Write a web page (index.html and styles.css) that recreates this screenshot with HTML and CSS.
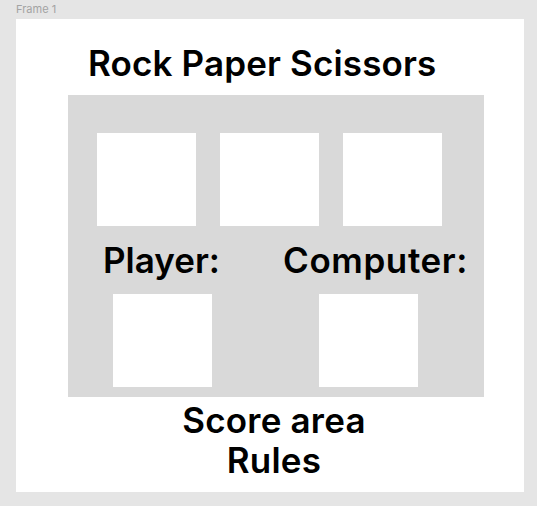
FILE: index.html
```html
<!DOCTYPE html>
<html>
<head>
<meta charset="utf-8">
<link rel="stylesheet" href="styles.css">
</head>
<body>
<div class="label">Frame 1</div>
<div class="frame">
  <h1 class="title">Rock Paper Scissors</h1>
  <div class="panel">
    <div class="choices">
      <div class="box"></div>
      <div class="box"></div>
      <div class="box"></div>
    </div>
    <div class="players">
      <div class="player p1">
        <div class="name">Player:</div>
        <div class="box"></div>
      </div>
      <div class="player p2">
        <div class="name">Computer:</div>
        <div class="box"></div>
      </div>
    </div>
  </div>
  <div class="footer">
    <div class="line">Score area</div>
    <div class="line">Rules</div>
  </div>
</div>
</body>
</html>
```
FILE: styles.css
```css
* { box-sizing: border-box; }
html, body { margin: 0; padding: 0; }
body {
  background: #e5e5e5;
  font-family: Inter, "Noto Sans", sans-serif;
  width: 537px;
  height: 506px;
  overflow: hidden;
}
.label {
  font-size: 11px;
  color: #a3a3a3;
  padding: 2px 0 0 16px;
  height: 19px;
  line-height: 14px;
}
.frame {
  margin-left: 16px;
  width: 508px;
  height: 473px;
  background: #ffffff;
  display: flex;
  flex-direction: column;
}
.title {
  margin: 0;
  padding: 24px 0 0 72px;
  font-size: 35px;
  font-weight: 600;
  line-height: 40px;
  height: 76px;
  color: #000;
  letter-spacing: 0.15px;
}
.panel {
  margin-left: 52px;
  width: 416px;
  height: 302px;
  background: #d9d9d9;
  padding: 38px 0 0 29px;
}
.choices {
  display: flex;
  gap: 24px;
}
.box {
  background: #ffffff;
  width: 99px;
  height: 93px;
}
.players {
  display: flex;
  margin-top: 14px;
}
.name {
  font-size: 35px;
  font-weight: 600;
  line-height: 40px;
  color: #000;
  margin-bottom: 14px;
}
.p1 { width: 183px; padding-left: 6px; }
.p1 .box { margin-left: 10px; }
.p2 { padding-left: 3px; }
.p2 .name { letter-spacing: 0.6px; }
.p2 .box { margin-left: 36px; }
.footer {
  text-align: center;
  padding-left: 8px;
  margin-top: 3px;
}
.line {
  font-size: 35px;
  font-weight: 600;
  line-height: 40px;
  color: #000;
  letter-spacing: 0.2px;
}
```
